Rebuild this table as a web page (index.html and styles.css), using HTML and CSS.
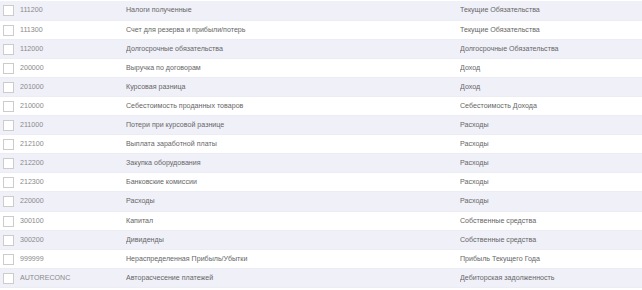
FILE: index.html
```html
<!DOCTYPE html>
<html lang="ru">
<head>
<meta charset="utf-8">
<title>Счета</title>
<link rel="stylesheet" href="styles.css">
</head>
<body>
<div class="wrap">
<table class="grid">
<tbody>
<tr class="odd"><td class="chk"><span class="box"></span></td><td class="code">111200</td><td class="name">Налоги полученные</td><td class="type">Текущие Обязательства</td></tr>
<tr><td class="chk"><span class="box"></span></td><td class="code">111300</td><td class="name">Счет для резерва и прибыли/потерь</td><td class="type">Текущие Обязательства</td></tr>
<tr class="odd"><td class="chk"><span class="box"></span></td><td class="code">112000</td><td class="name">Долгосрочные обязательства</td><td class="type">Долгосрочные Обязательства</td></tr>
<tr><td class="chk"><span class="box"></span></td><td class="code">200000</td><td class="name">Выручка по договорам</td><td class="type">Доход</td></tr>
<tr class="odd"><td class="chk"><span class="box"></span></td><td class="code">201000</td><td class="name">Курсовая разница</td><td class="type">Доход</td></tr>
<tr><td class="chk"><span class="box"></span></td><td class="code">210000</td><td class="name">Себестоимость проданных товаров</td><td class="type">Себестоимость Дохода</td></tr>
<tr class="odd"><td class="chk"><span class="box"></span></td><td class="code">211000</td><td class="name">Потери при курсовой разнице</td><td class="type">Расходы</td></tr>
<tr><td class="chk"><span class="box"></span></td><td class="code">212100</td><td class="name">Выплата заработной платы</td><td class="type">Расходы</td></tr>
<tr class="odd"><td class="chk"><span class="box"></span></td><td class="code">212200</td><td class="name">Закупка оборудования</td><td class="type">Расходы</td></tr>
<tr><td class="chk"><span class="box"></span></td><td class="code">212300</td><td class="name">Банковские комиссии</td><td class="type">Расходы</td></tr>
<tr class="odd"><td class="chk"><span class="box"></span></td><td class="code">220000</td><td class="name">Расходы</td><td class="type">Расходы</td></tr>
<tr><td class="chk"><span class="box"></span></td><td class="code">300100</td><td class="name">Капитал</td><td class="type">Собственные средства</td></tr>
<tr class="odd"><td class="chk"><span class="box"></span></td><td class="code">300200</td><td class="name">Дивиденды</td><td class="type">Собственные средства</td></tr>
<tr><td class="chk"><span class="box"></span></td><td class="code">999999</td><td class="name">Нераспределенная Прибыль/Убытки</td><td class="type">Прибыль Текущего Года</td></tr>
<tr class="odd"><td class="chk"><span class="box"></span></td><td class="code">AUTORECONC</td><td class="name">Авторасчесение платежей</td><td class="type">Дебиторская задолженность</td></tr>
</tbody>
</table>
</div>
</body>
</html>
```

FILE: styles.css
```css
html, body {
  margin: 0;
  padding: 0;
  background: #ffffff;
}
.wrap {
  padding-top: 1px;
}
.grid {
  width: 642px;
  border-collapse: collapse;
  table-layout: fixed;
  font-family: "Liberation Sans", Arial, sans-serif;
  font-size: 7.1px;
  color: #666;
}
.grid tr {
  height: 19.1px;
  background: #ffffff;
}
.grid tr.odd {
  background: #f0f0f9;
}
.grid td {
  padding: 0;
  vertical-align: middle;
  white-space: nowrap;
  overflow: hidden;
  border-bottom: 1px solid #ececf4;
}
.chk {
  width: 20px;
}
.box {
  display: block;
  width: 9px;
  height: 9px;
  margin-left: 3px;
  margin-top: 1px;
  border: 1px solid #cccccc;
  background: #fff;
}
.code {
  width: 106px;
  color: #8a8a8a;
}
.name {
  width: 334px;
}
.type {
  color: #666;
}
```
